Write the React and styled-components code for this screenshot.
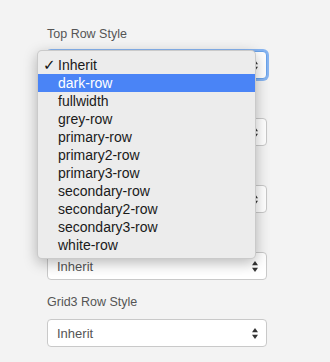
import React from "react";
import styled, { createGlobalStyle } from "styled-components";

const Global = createGlobalStyle`
  html, body { margin: 0; padding: 0; background: #f3f3f3; }
  body { font-family: "Liberation Sans", Arial, sans-serif; }
`;

const Page = styled.div`
  width: 330px;
  height: 362px;
  box-sizing: border-box;
  padding: 25px 0 0 47px;
  background: #f3f3f3;
  overflow: hidden;
`;

const Group = styled.div`
  position: relative;
  display: flex;
  flex-direction: column;
  width: 220px;
  margin-bottom: 13px;
`;

const Label = styled.label`
  font-size: 12.5px;
  line-height: 18px;
  color: #555;
  margin-bottom: 8px;
`;

const SelectBox = styled.div`
  box-sizing: border-box;
  height: 28px;
  width: 220px;
  display: flex;
  align-items: center;
  justify-content: space-between;
  padding: 0 8px 0 9px;
  background: #fff;
  border: 1px solid ${(p) => (p.$focused ? "#6aa3ea" : "#c9c9c9")};
  border-radius: 4px;
  box-shadow: ${(p) => (p.$focused ? "0 0 0 2px rgba(100,160,240,0.75)" : "none")};
  font-size: 13px;
  color: #555;
`;

const Menu = styled.ul`
  position: absolute;
  left: -10px;
  top: 25px;
  width: 219px;
  box-sizing: border-box;
  margin: 0;
  padding: 5px 0 4px;
  list-style: none;
  background: #ececec;
  border: 1px solid rgba(0, 0, 0, 0.14);
  border-radius: 5px;
  box-shadow: 0 4px 14px rgba(0, 0, 0, 0.28);
  z-index: 10;
`;

const Item = styled.li`
  position: relative;
  height: 18px;
  line-height: 18px;
  padding-left: 20px;
  font-size: 14px;
  color: ${(p) => (p.$active ? "#fff" : "#1a1a1a")};
  background: ${(p) => (p.$active ? "#4a84f6" : "transparent")};
`;

const Check = styled.span`
  position: absolute;
  left: 5px;
  top: 0;
  font-size: 15px;
  font-family: "DejaVu Sans", sans-serif;
  font-weight: bold;
  color: #111;
`;

const Arrows = () => (
  <svg width="6" height="11" viewBox="0 0 6 11">
    <path d="M3 0 L6 4.2 L0 4.2 Z" fill="#333" />
    <path d="M3 11 L6 6.8 L0 6.8 Z" fill="#333" />
  </svg>
);

const options = [
  "Inherit",
  "dark-row",
  "fullwidth",
  "grey-row",
  "primary-row",
  "primary2-row",
  "primary3-row",
  "secondary-row",
  "secondary2-row",
  "secondary3-row",
  "white-row",
];

const fields = [
  "Top Row Style",
  "Middle Row Style",
  "Bottom Row Style",
  "Grid2 Row Style",
  "Grid3 Row Style",
];

export default function App() {
  return (
    <Page>
      <Global />
      {fields.map((f, i) => (
        <Group key={f}>
          <Label>{f}</Label>
          <SelectBox $focused={i === 0}>
            <span>Inherit</span>
            <Arrows />
          </SelectBox>
          {i === 0 && (
            <Menu>
              {options.map((o, j) => (
                <Item key={o} $active={j === 1}>
                  {j === 0 && <Check>✓</Check>}
                  {o}
                </Item>
              ))}
            </Menu>
          )}
        </Group>
      ))}
    </Page>
  );
}
